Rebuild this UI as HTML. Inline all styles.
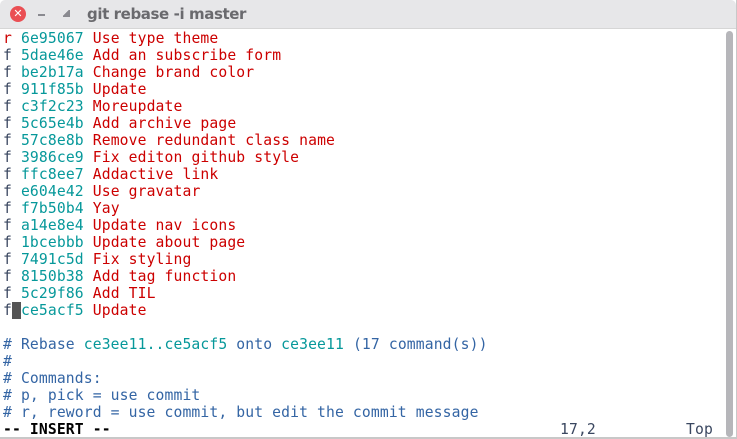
<!DOCTYPE html>
<html><head><style>
html,body{margin:0;padding:0;width:737px;height:439px;overflow:hidden;background:#fff}
.tb{position:absolute;left:0;top:0;width:736px;height:28px;background:#e7e7e9;border-radius:5px 5px 0 0;border-bottom:1px solid #d6d6d6}
.title{position:absolute;left:87px;top:5px;font:bold 15px "DejaVu Sans",sans-serif;color:#6a6a6e;letter-spacing:-0.4px}
.close{position:absolute;left:10px;top:6px;width:16px;height:16px;border-radius:50%;background:#ea4f54;color:#fff;font:bold 11px "DejaVu Sans",sans-serif;text-align:center;line-height:16px}
.min{position:absolute;left:38px;top:14px;width:7px;height:2px;background:#8a8a90}
.max{position:absolute;left:63px;top:10px;width:7px;height:7px;background:linear-gradient(135deg,transparent 40%,#8a8a90 40%)}
.term{position:absolute;left:3px;top:30px;font-family:"DejaVu Sans Mono",monospace;font-size:14.7px;letter-spacing:0.13px;line-height:17px;white-space:pre;color:#3a4760}
.r{color:#cc0000}.t{color:#06989a}.c{color:#3465a4}.b{font-weight:bold;color:#000}
.cur{background:#555;color:#fff}
.sb{position:absolute;left:726px;top:31px;width:7px;height:406px;background:#b6b6ba;border-radius:4px}
.edge{position:absolute;left:736px;top:0;width:1px;height:439px;background:#c8c8c8}
.bot{position:absolute;left:0;top:437px;width:737px;height:2px;background:#c8c8c8}
.pos{position:absolute;top:421px;font-family:"DejaVu Sans Mono",monospace;font-size:14.7px;letter-spacing:0.13px;line-height:17px;color:#3a4760;white-space:pre}
</style></head><body>
<div class="tb"><div class="close">✕</div><div class="min"></div><div class="max"></div><div class="title">git rebase -i master</div></div>
<div class="term"><span class="r">r</span> <span class="t">6e95067</span> <span class="r">Use type theme</span>
f <span class="t">5dae46e</span> <span class="r">Add an subscribe form</span>
f <span class="t">be2b17a</span> <span class="r">Change brand color</span>
f <span class="t">911f85b</span> <span class="r">Update</span>
f <span class="t">c3f2c23</span> <span class="r">Moreupdate</span>
f <span class="t">5c65e4b</span> <span class="r">Add archive page</span>
f <span class="t">57c8e8b</span> <span class="r">Remove redundant class name</span>
f <span class="t">3986ce9</span> <span class="r">Fix editon github style</span>
f <span class="t">ffc8ee7</span> <span class="r">Addactive link</span>
f <span class="t">e604e42</span> <span class="r">Use gravatar</span>
f <span class="t">f7b50b4</span> <span class="r">Yay</span>
f <span class="t">a14e8e4</span> <span class="r">Update nav icons</span>
f <span class="t">1bcebbb</span> <span class="r">Update about page</span>
f <span class="t">7491c5d</span> <span class="r">Fix styling</span>
f <span class="t">8150b38</span> <span class="r">Add tag function</span>
f <span class="t">5c29f86</span> <span class="r">Add TIL</span>
f<span class="cur"> </span><span class="t">ce5acf5</span> <span class="r">Update</span>

<span class="c"># Rebase <span class="t">ce3ee11..ce5acf5</span> onto <span class="t">ce3ee11</span> (17 command(s))</span>
<span class="c">#</span>
<span class="c"># Commands:</span>
<span class="c"># p, pick = use commit</span>
<span class="c"># r, reword = use commit, but edit the commit message</span>
<span class="b">-- INSERT --</span></div>
<div class="pos" style="left:560px">17,2</div>
<div class="pos" style="left:686px">Top</div>
<div class="sb"></div><div class="edge"></div><div class="bot"></div>
</body></html>
